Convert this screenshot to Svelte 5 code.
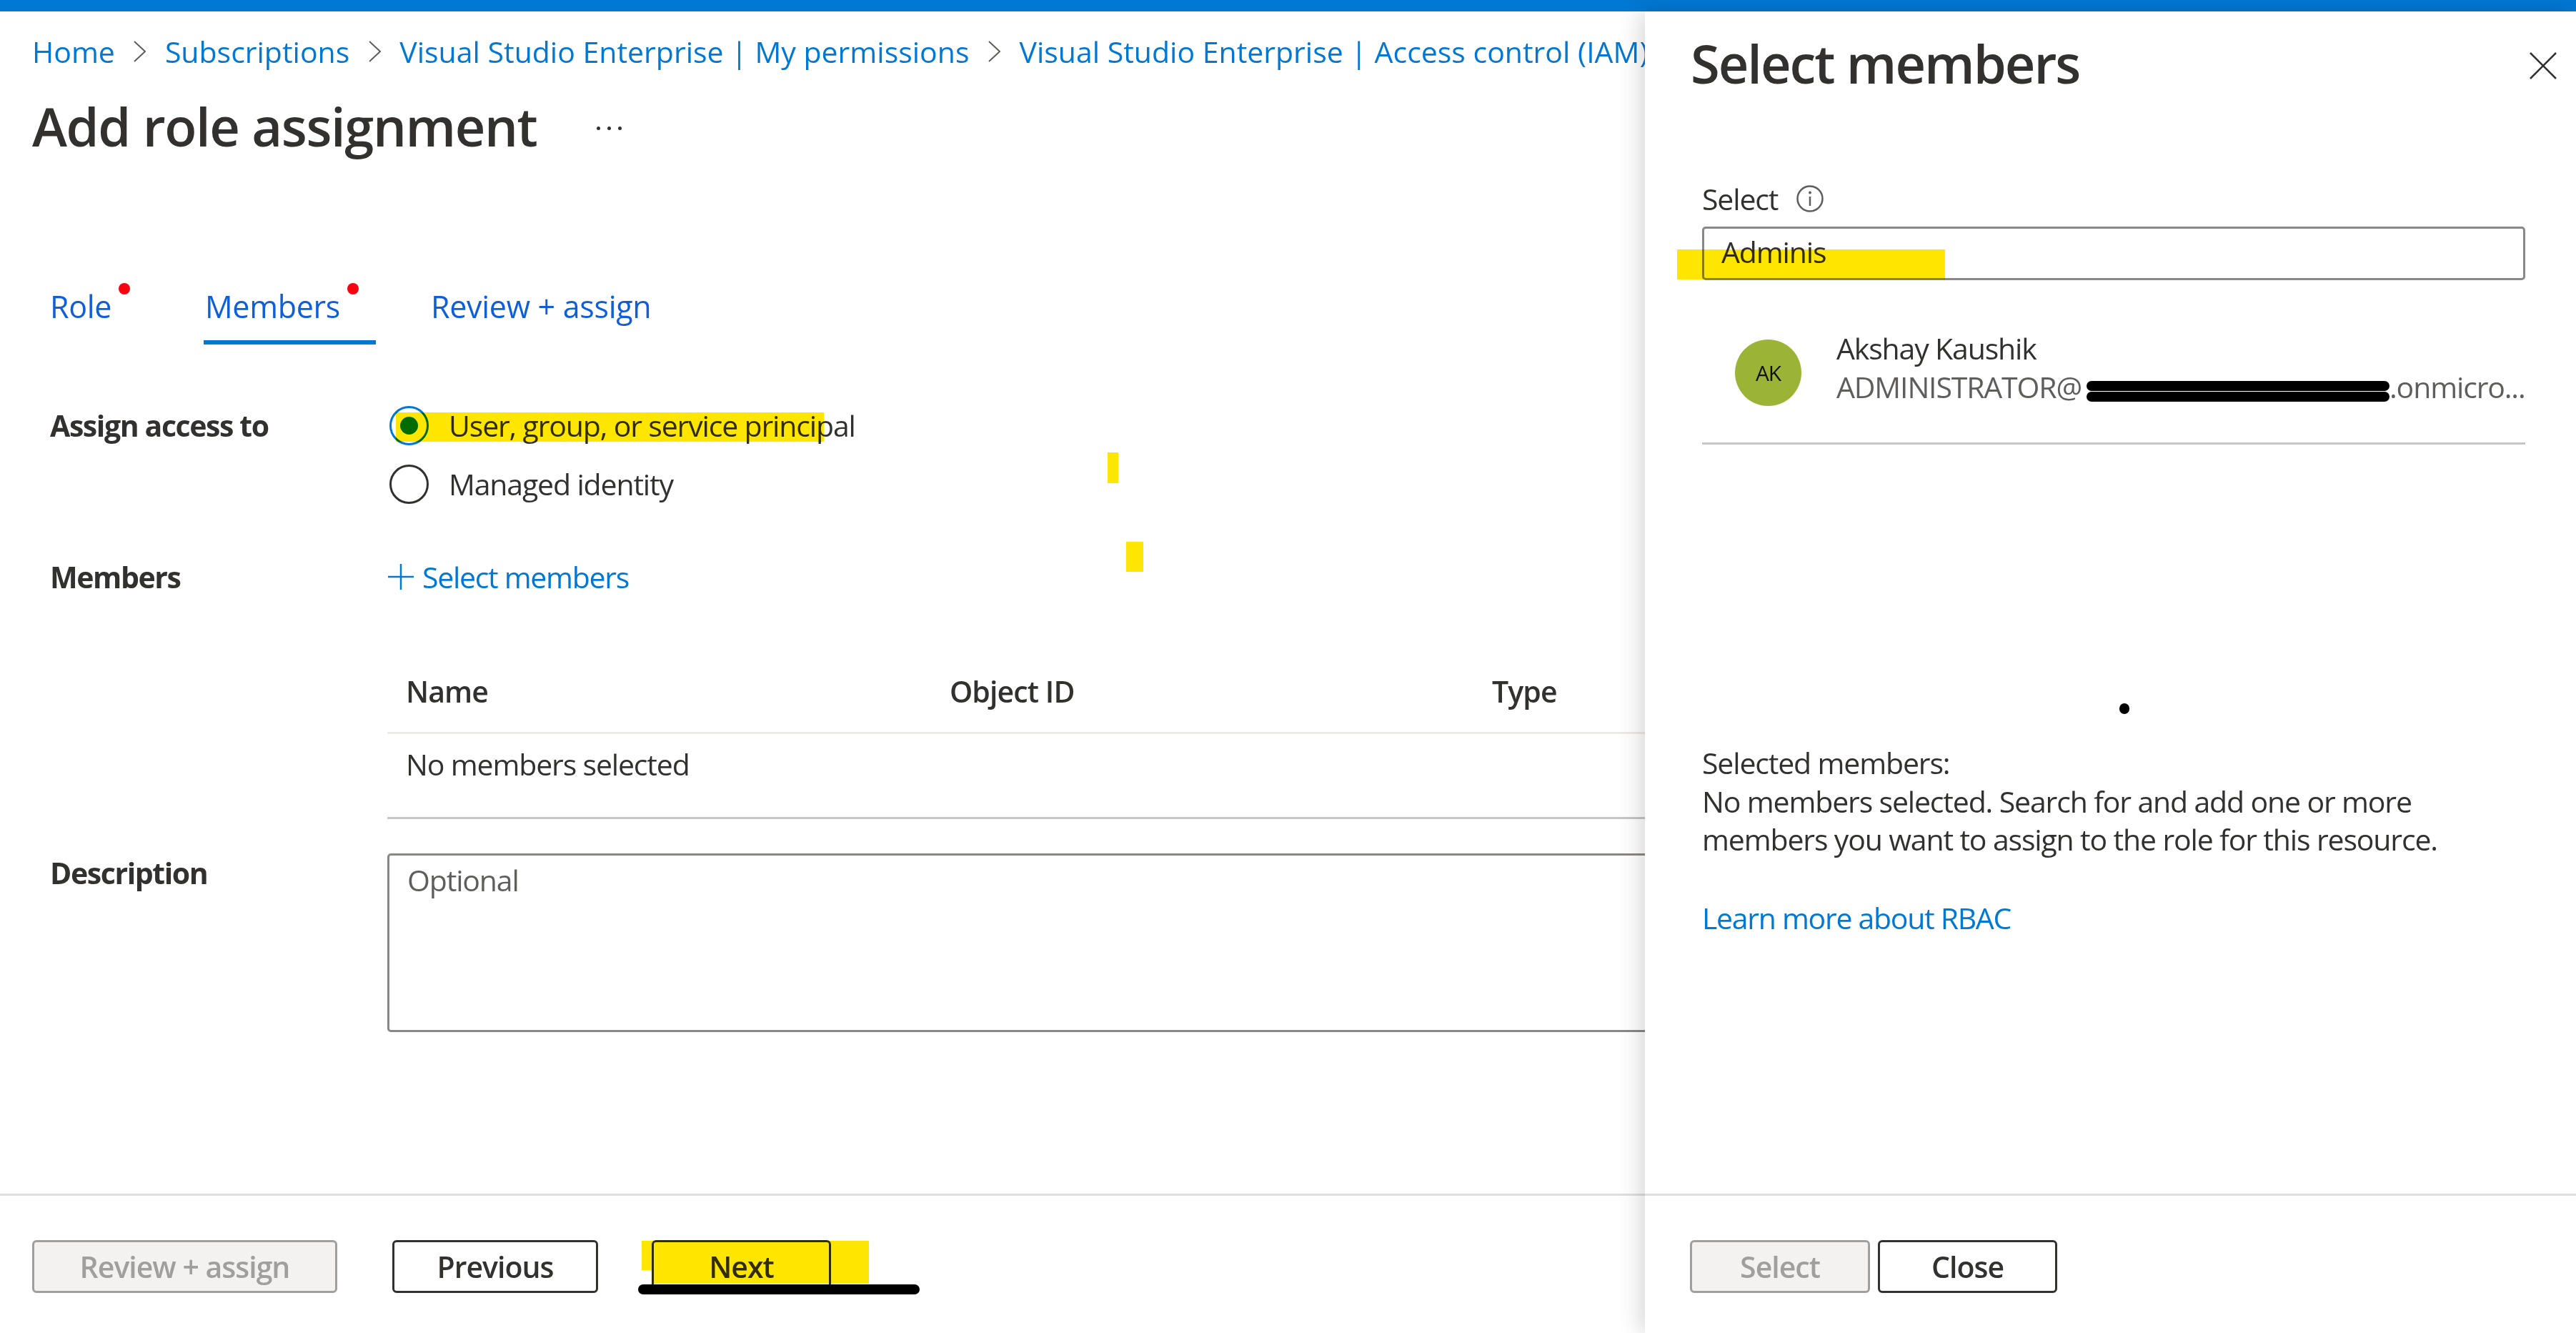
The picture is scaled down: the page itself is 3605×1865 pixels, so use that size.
<script>
// highlighter and marker strokes drawn on top of the screenshot
const marks = [
    { kind: "yellow", x: 554, y: 577, w: 599, h: 41 },
    { kind: "yellow", x: 1550, y: 633, w: 15, h: 43 },
    { kind: "yellow", x: 1576, y: 758, w: 24, h: 42 },
    { kind: "yellow", x: 898, y: 1736, w: 318, h: 41 },
    { kind: "yellow", x: 912, y: 1777, w: 304, h: 19 },
    { kind: "yellow", x: 2347, y: 349, w: 375, h: 42 },
    { kind: "black", x: 893, y: 1797, w: 394, h: 14 },
    { kind: "black", x: 2966, y: 984, w: 14, h: 15 }
];

const crumbs = [
    "Home",
    "Subscriptions",
    "Visual Studio Enterprise | My permissions",
    "Visual Studio Enterprise | Access control (IAM)"
];
</script>

<div class="page">
    <div class="topbar"></div>

    <div class="blade">
        <nav class="crumbs">
            {#each crumbs as crumb, i}
                {#if i > 0}
                    <svg class="chevron" viewBox="0 0 17 30"><path d="M1 1 L16 15 L1 29" /></svg>
                {/if}
                <span>{crumb}</span>
            {/each}
        </nav>

        <div class="title_row">
            <h1>Add role assignment</h1>
            <span class="more">
                <i></i><i></i><i></i>
            </span>
        </div>

        <div class="tabs">
            <div class="tab tab_role">Role<span class="dot dot_role"></span></div>
            <div class="tab tab_members">Members<span class="dot dot_members"></span></div>
            <div class="tab">Review + assign</div>
        </div>

        <div class="form_row first_row">
            <div class="label">Assign access to</div>
            <div class="radios">
                <div class="radio_line">
                    <span class="radio checked"><b></b></span>
                    <span>User, group, or service principal</span>
                </div>
                <div class="radio_line">
                    <span class="radio"></span>
                    <span>Managed identity</span>
                </div>
            </div>
        </div>

        <div class="form_row members_row">
            <div class="label">Members</div>
            <div class="add_link">
                <svg class="plus" viewBox="0 0 36 36"><path d="M18 0 V36 M0 18 H36" /></svg>
                <span>Select members</span>
            </div>
        </div>

        <div class="table">
            <div class="table_head">
                <span>Name</span>
                <span>Object ID</span>
                <span>Type</span>
            </div>
            <div class="table_body">No members selected</div>
        </div>

        <div class="form_row desc_row">
            <div class="label">Description</div>
            <div class="textarea">Optional</div>
        </div>

        <div class="footer">
            <button class="btn disabled btn_review">Review + assign</button>
            <button class="btn btn_prev">Previous</button>
            <button class="btn btn_next">Next</button>
        </div>
    </div>

    <aside class="panel">
        <div class="panel_head">
            <h2>Select members</h2>
            <svg class="close" viewBox="0 0 38 38"><path d="M1 1 L37 37 M37 1 L1 37" /></svg>
        </div>

        <div class="panel_body">
            <div class="select_label">
                <span>Select</span>
                <svg class="info" viewBox="0 0 38 38">
                    <circle cx="19" cy="19" r="17.5" />
                    <path d="M19 16 V29" />
                    <circle class="info_dot" cx="19" cy="10.5" r="2" />
                </svg>
            </div>
            <div class="input">Adminis</div>

            <div class="result">
                <div class="avatar">AK</div>
                <div class="result_text">
                    <div class="result_name">Akshay Kaushik</div>
                    <div class="result_mail">
                        <span class="mail_user">ADMINISTRATOR@</span>
                        <span class="redacted"><i></i><i></i></span>
                        <span>.onmicro...</span>
                    </div>
                </div>
            </div>

            <div class="selected">
                <div>Selected members:</div>
                <div>No members selected. Search for and add one or more</div>
                <div>members you want to assign to the role for this resource.</div>
            </div>
            <div class="learn">Learn more about RBAC</div>
        </div>

        <div class="panel_footer">
            <button class="btn disabled btn_select">Select</button>
            <button class="btn btn_close">Close</button>
        </div>
    </aside>

    {#each marks as m}
        <div class="mark {m.kind}" style="left:{m.x}px;top:{m.y}px;width:{m.w}px;height:{m.h}px"></div>
    {/each}
</div>

<style>
    :global(body) {
        margin: 0;
        background: #fff;
    }

    .page {
        position: relative;
        width: 3605px;
        height: 1865px;
        overflow: hidden;
        font-family: "Open Sans", "Noto Sans", sans-serif;
        font-size: 41px;
        line-height: 58px;
        letter-spacing: -1.15px;
        color: #323130;
        background: #fff;
        display: flex;
        flex-direction: column;
    }

    .topbar {
        height: 16px;
        flex: none;
        background: #0078d4;
    }

    .blade {
        flex: 1;
        display: flex;
        flex-direction: column;
        min-height: 0;
        padding-left: 45px;
    }

    .crumbs {
        display: flex;
        align-items: center;
        margin-top: 27px;
        white-space: nowrap;
        color: #0078d4;
        letter-spacing: 0;
    }

    .chevron {
        width: 17px;
        height: 30px;
        margin: 0 26.5px;
        flex: none;
    }

    .chevron path {
        fill: none;
        stroke: #605e5c;
        stroke-width: 2;
    }

    .title_row {
        display: flex;
        align-items: center;
        margin-top: 31px;
    }

    h1,
    h2 {
        margin: 0;
        font-size: 74px;
        line-height: 90px;
        font-weight: 600;
        letter-spacing: -1.4px;
    }

    h2 {
        letter-spacing: -2px;
    }

    .more {
        display: flex;
        gap: 10px;
        margin: 4px 0 0 84px;
    }

    .more i {
        width: 5px;
        height: 5px;
        border-radius: 50%;
        background: #323130;
    }

    .tabs {
        display: flex;
        gap: 75px;
        margin-top: 178px;
        padding-left: 23px;
        color: #0f5fd8;
        font-size: 43px;
        letter-spacing: -0.3px;
    }

    .tab {
        position: relative;
        padding: 0 0 18px 2px;
        border-bottom: 6px solid transparent;
    }

    .tab_role {
        width: 140px;
    }

    .tab_members {
        width: 239px;
        border-bottom-color: #0078d4;
    }

    .dot {
        position: absolute;
        top: -4px;
        width: 16px;
        height: 16px;
        border-radius: 50%;
        background: #fa0011;
    }

    .dot_role {
        left: 98px;
    }

    .dot_members {
        left: 201px;
    }

    .form_row {
        display: flex;
        align-items: flex-start;
    }

    .first_row {
        margin-top: 84px;
    }

    .members_row {
        margin-top: 72px;
    }

    .desc_row {
        margin-top: 46px;
    }

    .label {
        width: 497px;
        flex: none;
        box-sizing: border-box;
        padding-left: 25px;
        font-weight: 700;
        letter-spacing: -1.4px;
    }

    .radios {
        display: flex;
        flex-direction: column;
        gap: 24px;
    }

    .radio_line {
        display: flex;
        align-items: center;
        padding-left: 3px;
        gap: 28px;
        white-space: nowrap;
    }

    .radio {
        width: 55px;
        height: 55px;
        flex: none;
        box-sizing: border-box;
        border: 3px solid #323130;
        border-radius: 50%;
        display: flex;
        align-items: center;
        justify-content: center;
    }

    .radio.checked {
        border-color: #0078d4;
    }

    .radio b {
        width: 25px;
        height: 25px;
        border-radius: 50%;
        background: #0078d4;
    }

    .add_link {
        display: flex;
        align-items: center;
        gap: 12px;
        color: #0078d4;
        letter-spacing: -1.3px;
    }

    .plus {
        width: 36px;
        height: 36px;
        margin-left: 1px;
    }

    .plus path {
        fill: none;
        stroke: #0078d4;
        stroke-width: 2.5;
    }

    .table {
        margin: 102px 0 0 497px;
    }

    .table_head {
        display: grid;
        grid-template-columns: 761px 759px 1fr;
        padding: 0 0 28px 26px;
        border-bottom: 3px solid #edebe9;
        font-weight: 600;
        letter-spacing: -0.9px;
    }

    .table_body {
        padding: 13px 0 45px 26px;
        border-bottom: 3px solid #c8c6c4;
    }

    .textarea {
        flex: 1;
        height: 250px;
        box-sizing: border-box;
        margin-top: 2px;
        padding: 5px 25px;
        border: 3px solid #8a8886;
        border-radius: 5px;
        color: #605e5c;
    }

    .footer {
        margin: auto 0 0 -45px;
        height: 195px;
        box-sizing: border-box;
        padding: 62px 0 0 45px;
        border-top: 3px solid #e1dfdd;
        display: flex;
        align-items: flex-start;
    }

    .btn {
        height: 74px;
        box-sizing: border-box;
        padding: 0;
        border: 3px solid #323130;
        border-radius: 6px;
        background: #fff;
        color: #323130;
        font: inherit;
        font-weight: 600;
        letter-spacing: -1px;
    }

    .btn.disabled {
        border-color: #a19f9d;
        background: #f3f2f1;
        color: #a19f9d;
    }

    .btn_review {
        width: 427px;
    }

    .btn_prev {
        width: 288px;
        margin-left: 77px;
    }

    .btn_next {
        width: 251px;
        margin-left: 75px;
    }

    .panel {
        position: absolute;
        left: 2302px;
        top: 16px;
        right: 0;
        bottom: 0;
        display: flex;
        flex-direction: column;
        background: #fff;
        box-shadow: -6px 0 30px rgba(0, 0, 0, 0.16);
    }

    .panel_head {
        display: flex;
        justify-content: space-between;
        align-items: flex-start;
        margin-top: 28px;
        padding: 0 27px 0 64px;
    }

    .close {
        width: 38px;
        height: 38px;
        margin-top: 29px;
    }

    .close path {
        fill: none;
        stroke: #323130;
        stroke-width: 2.5;
    }

    .panel_body {
        display: flex;
        flex-direction: column;
        padding: 0 71px 0 80px;
    }

    .select_label {
        display: flex;
        align-items: center;
        gap: 26px;
        margin-top: 115px;
    }

    .info {
        width: 38px;
        height: 38px;
    }

    .info circle {
        fill: none;
        stroke: #605e5c;
        stroke-width: 2.5;
    }

    .info path {
        fill: none;
        stroke: #605e5c;
        stroke-width: 2.5;
    }

    .info .info_dot {
        fill: #605e5c;
        stroke: none;
    }

    .input {
        height: 75px;
        box-sizing: border-box;
        margin-top: 10px;
        padding: 3px 24px 0;
        border: 3px solid #8a8886;
        border-radius: 5px;
    }

    .result {
        display: flex;
        align-items: flex-start;
        gap: 49px;
        margin-top: 68px;
        padding: 0 0 51px 46px;
        border-bottom: 3px solid #c8c6c4;
    }

    .avatar {
        width: 93px;
        height: 93px;
        flex: none;
        margin-top: 15px;
        border-radius: 50%;
        background: #9bb435;
        display: flex;
        align-items: center;
        justify-content: center;
        color: #111;
        font-size: 30px;
    }

    .result_text {
        line-height: 54px;
    }

    .result_mail {
        display: flex;
        color: #605e5c;
        white-space: nowrap;
    }

    .mail_user {
        width: 350px;
    }

    .redacted {
        width: 424px;
        display: flex;
        flex-direction: column;
        gap: 1px;
        padding-top: 19px;
    }

    .redacted i {
        height: 14px;
        border-radius: 7px;
        background: #000;
    }

    .selected {
        margin-top: 419px;
        line-height: 53.5px;
    }

    .learn {
        margin-top: 56px;
        line-height: 53.5px;
        color: #0078d4;
        letter-spacing: -1.3px;
    }

    .panel_footer {
        margin-top: auto;
        height: 195px;
        box-sizing: border-box;
        padding: 62px 0 0 63px;
        border-top: 3px solid #e1dfdd;
        display: flex;
        align-items: flex-start;
        gap: 11px;
    }

    .btn_select {
        width: 252px;
    }

    .btn_close {
        width: 251px;
    }

    .mark {
        position: absolute;
    }

    .mark.yellow {
        background: #ffe600;
        mix-blend-mode: multiply;
    }

    .mark.black {
        background: #000;
        border-radius: 8px;
    }
</style>
